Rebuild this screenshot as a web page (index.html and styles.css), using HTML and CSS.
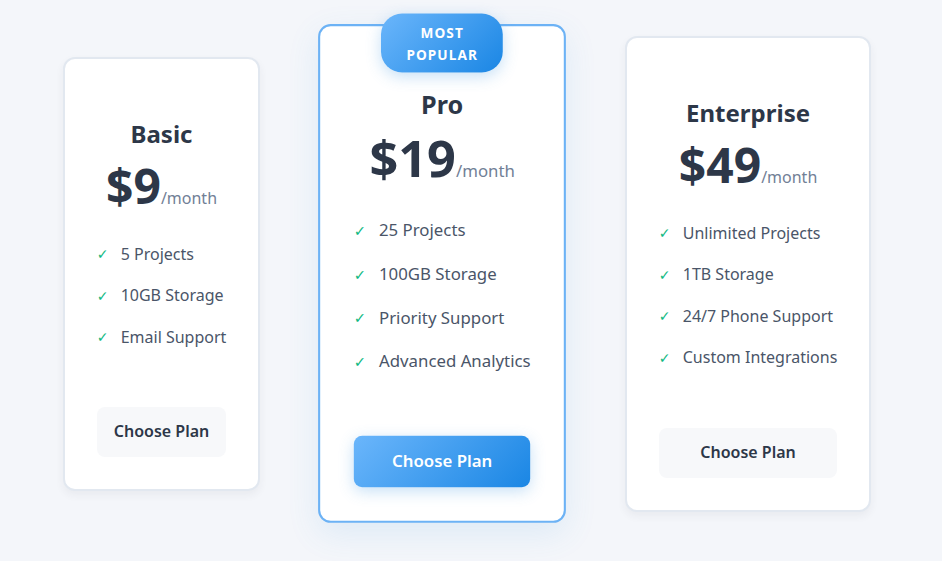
FILE: index.html
```html
<!DOCTYPE html>
<html lang="en">
<head>
<meta charset="utf-8">
<title>Pricing</title>
<link rel="stylesheet" href="styles.css">
</head>
<body>
<main class="pricing">
  <div class="card">
    <h3 class="plan-name">Basic</h3>
    <div class="price">$9<span class="period">/month</span></div>
    <ul class="features">
      <li><span class="check">✓</span>5 Projects</li>
      <li><span class="check">✓</span>10GB Storage</li>
      <li><span class="check">✓</span>Email Support</li>
    </ul>
    <button class="btn">Choose Plan</button>
  </div>
  <div class="card card-featured">
    <div class="badge">Most Popular</div>
    <h3 class="plan-name">Pro</h3>
    <div class="price">$19<span class="period">/month</span></div>
    <ul class="features">
      <li><span class="check">✓</span>25 Projects</li>
      <li><span class="check">✓</span>100GB Storage</li>
      <li><span class="check">✓</span>Priority Support</li>
      <li><span class="check">✓</span>Advanced Analytics</li>
    </ul>
    <button class="btn btn-primary">Choose Plan</button>
  </div>
  <div class="card">
    <h3 class="plan-name">Enterprise</h3>
    <div class="price">$49<span class="period">/month</span></div>
    <ul class="features">
      <li><span class="check">✓</span>Unlimited Projects</li>
      <li><span class="check">✓</span>1TB Storage</li>
      <li><span class="check">✓</span>24/7 Phone Support</li>
      <li><span class="check">✓</span>Custom Integrations</li>
    </ul>
    <button class="btn">Choose Plan</button>
  </div>
</main>
</body>
</html>
```

FILE: styles.css
```css
* { box-sizing: border-box; }

html, body {
  margin: 0;
  padding: 0;
}

body {
  background: #f4f6fa;
  font-family: "Noto Sans", "Open Sans", sans-serif;
  line-height: 1.6;
  color: #2d3748;
}

.pricing {
  display: flex;
  justify-content: center;
  align-items: center;
  gap: 64px;
  min-height: 100vh;
  padding: 0 8px 13px 0;
}

.card {
  position: relative;
  background: #ffffff;
  border: 2px solid #e2e8f0;
  border-radius: 12px;
  padding: 32px;
  text-align: center;
  box-shadow: 0 4px 8px rgba(45, 55, 72, 0.06);
}

.card-featured {
  border-color: #6cb2f5;
  transform: scale(1.05);
  box-shadow: 0 10px 30px rgba(66, 153, 225, 0.12);
}

.badge {
  position: absolute;
  top: -12px;
  left: 50%;
  transform: translateX(-50%);
  background: linear-gradient(135deg, #6bb6fb 0%, #1a86e4 100%);
  color: #ffffff;
  font-size: 13px;
  font-weight: 700;
  text-transform: uppercase;
  letter-spacing: 1px;
  line-height: 1.6;
  padding: 8px 24px 6px;
  border-radius: 20px;
  box-shadow: 0 4px 14px rgba(66, 153, 225, 0.3);
}

.plan-name {
  margin: 24px 0 8px;
  font-size: 24px;
  font-weight: 700;
  color: #2d3748;
}

.price {
  font-size: 48px;
  font-weight: 700;
  line-height: 1;
  color: #2d3748;
}

.period {
  font-size: 16px;
  font-weight: 400;
  color: #718096;
}

.features {
  list-style: none;
  margin: 24px 0 49px;
  padding: 0;
  text-align: left;
}

.features li {
  display: flex;
  align-items: center;
  height: 41.6px;
  font-size: 16px;
  color: #4a5568;
  white-space: nowrap;
}

.check {
  display: inline-block;
  width: 12px;
  margin-right: 12px;
  font-family: "DejaVu Sans", sans-serif;
  font-size: 14px;
  font-weight: 700;
  color: #10b981;
}

.btn {
  display: block;
  width: 100%;
  padding: 12px 16px;
  border: none;
  border-radius: 8px;
  background: #f7f8fa;
  color: #2d3748;
  font-family: "Noto Sans", "Open Sans", sans-serif;
  font-size: 16px;
  font-weight: 600;
  line-height: 1.6;
  cursor: pointer;
}

.btn-primary {
  background: linear-gradient(135deg, #6bb6fb 0%, #1a86e4 100%);
  color: #ffffff;
  box-shadow: 0 4px 14px rgba(66, 153, 225, 0.3);
}
```
